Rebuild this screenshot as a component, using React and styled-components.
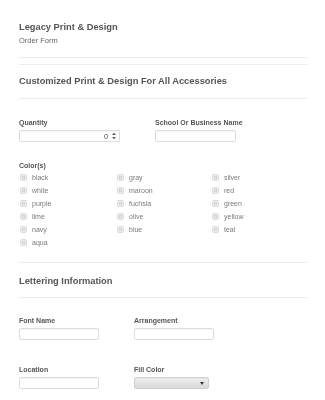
import React from "react";
import styled, { createGlobalStyle } from "styled-components";

const Global = createGlobalStyle`
  html, body { margin: 0; padding: 0; background: #fff; }
  body {
    font-family: "Liberation Sans", Arial, sans-serif;
    color: #555;
    -webkit-font-smoothing: antialiased;
  }
`;

const Page = styled.div`
  width: 325px;
  padding: 0 18px 0 19px;
  box-sizing: border-box;
  will-change: transform;
`;

const Header = styled.div`
  padding: 22px 0 11px;
  border-bottom: 1px solid #ececec;
`;

const Title = styled.div`
  font-size: 9.3px;
  line-height: 11px;
  font-weight: bold;
  color: #555;
`;

const Subtitle = styled.div`
  margin-top: 3px;
  font-size: 7.5px;
  line-height: 10px;
  color: #666;
`;

const SectionHead = styled.div`
  margin-top: ${(p) => p.$mt}px;
  padding: ${(p) => p.$pt}px 0 ${(p) => p.$pb}px;
  border-top: ${(p) => (p.$top ? "1px solid #ececec" : "none")};
  border-bottom: 1px solid #ececec;
`;

const Row = styled.div`
  display: grid;
  grid-template-columns: ${(p) => p.$cols};
  margin-top: ${(p) => p.$mt}px;
`;

const Field = styled.div`
  display: flex;
  flex-direction: column;
  align-items: flex-start;
`;

const Label = styled.div`
  font-size: 7px;
  line-height: 9px;
  font-weight: bold;
  color: #555;
`;

const Input = styled.div`
  margin-top: 3px;
  width: ${(p) => p.$w}px;
  height: 12px;
  box-sizing: border-box;
  border: 1px solid #dcdcdc;
  border-radius: 2px;
  background: #fff;
  box-shadow: inset 0 1px 1px rgba(0,0,0,0.03);
  display: flex;
  align-items: center;
  justify-content: flex-end;
  font-size: 7px;
  color: #444;
  padding-right: 3px;
`;

const Spinner = styled.svg`
  margin-left: 4px;
  display: block;
`;

const Select = styled(Input)`
  background: linear-gradient(#eee, #d9d9d9);
  border-color: #cfcfcf;
  padding-right: 4px;
`;

const Checks = styled.div`
  display: grid;
  grid-template-columns: 97px 95px 1fr;
  grid-auto-rows: 13px;
  margin-top: 1px;
`;

const Check = styled.div`
  display: flex;
  align-items: center;
  font-size: 7px;
  color: #7a7a7a;
`;

const Box = styled.span`
  width: 7px;
  height: 7px;
  margin-left: 1px;
  margin-right: 5px;
  box-sizing: border-box;
  border: 1px solid #dadada;
  border-radius: 2px;
  background: #efefef;
  display: inline-flex;
  align-items: center;
  justify-content: center;
  &::after {
    content: "";
    width: 3px;
    height: 3px;
    border: 0.5px solid #d2d2d2;
    box-sizing: border-box;
  }
`;

const colors = [
  "black", "gray", "silver",
  "white", "maroon", "red",
  "purple", "fuchsia", "green",
  "lime", "olive", "yellow",
  "navy", "blue", "teal",
  "aqua",
];

export default function App() {
  return (
    <>
      <Global />
      <Page>
        <Header>
          <Title>Legacy Print &amp; Design</Title>
          <Subtitle>Order Form</Subtitle>
        </Header>
        <SectionHead $top $mt={6} $pt={11} $pb={11}>
          <Title>Customized Print &amp; Design For All Accessories</Title>
        </SectionHead>

        <Row $cols="136px 1fr" $mt={19}>
          <Field>
            <Label>Quantity</Label>
            <Input $w={101}>
              0
              <Spinner width="4" height="8" viewBox="0 0 4 8">
                <path d="M0 3 L2 0.5 L4 3 Z" fill="#666" />
                <path d="M0 5 L2 7.5 L4 5 Z" fill="#666" />
              </Spinner>
            </Input>
          </Field>
          <Field>
            <Label>School Or Business Name</Label>
            <Input $w={81} />
          </Field>
        </Row>

        <Row $cols="1fr" $mt={19}>
          <Label>Color(s)</Label>
        </Row>
        <Checks>
          {colors.map((c) => (
            <Check key={c}>
              <Box />
              {c}
            </Check>
          ))}
        </Checks>

        <SectionHead $top $mt={13} $pt={13} $pb={10}>
          <Title>Lettering Information</Title>
        </SectionHead>

        <Row $cols="115px 1fr" $mt={18}>
          <Field>
            <Label>Font Name</Label>
            <Input $w={80} />
          </Field>
          <Field>
            <Label>Arrangement</Label>
            <Input $w={80} />
          </Field>
        </Row>

        <Row $cols="115px 1fr" $mt={25}>
          <Field>
            <Label>Location</Label>
            <Input $w={80} />
          </Field>
          <Field>
            <Label>Fill Color</Label>
            <Select $w={75}>
              <svg width="4" height="3" viewBox="0 0 4 3">
                <path d="M0 0 L4 0 L2 3 Z" fill="#333" />
              </svg>
            </Select>
          </Field>
        </Row>
      </Page>
    </>
  );
}
